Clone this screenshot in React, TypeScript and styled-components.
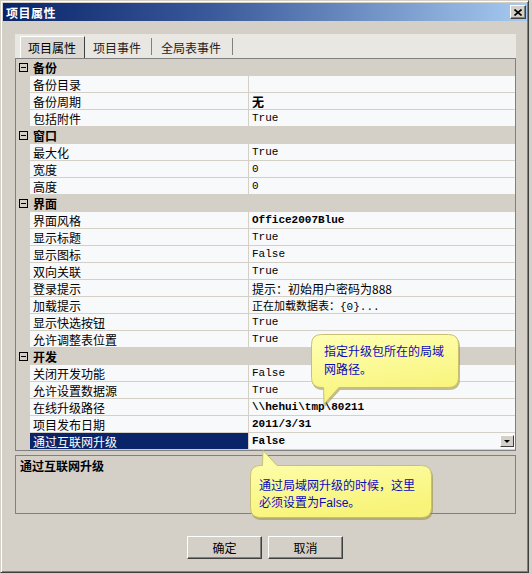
import React from 'react'
import styled, { createGlobalStyle } from 'styled-components'

const CJK = `'Noto Sans CJK SC', 'Liberation Sans', sans-serif`
const MONO = `'Liberation Mono', 'Noto Sans CJK SC', monospace`

const GlobalStyle = createGlobalStyle`
  html, body {
    margin: 0;
    padding: 0;
    background: #d4d0c8;
  }
  body {
    font-family: ${CJK};
    font-size: 12px;
    color: #000;
  }
`

type PropItem = {
  name: string
  value: string
  bold?: boolean
  mono?: boolean
  selected?: boolean
}

type Group = {
  title: string
  items: PropItem[]
}

const groups: Group[] = [
  {
    title: '备份',
    items: [
      { name: '备份目录', value: '' },
      { name: '备份周期', value: '无', bold: true },
      { name: '包括附件', value: 'True', mono: true },
    ],
  },
  {
    title: '窗口',
    items: [
      { name: '最大化', value: 'True', mono: true },
      { name: '宽度', value: '0', mono: true },
      { name: '高度', value: '0', mono: true },
    ],
  },
  {
    title: '界面',
    items: [
      { name: '界面风格', value: 'Office2007Blue', mono: true, bold: true },
      { name: '显示标题', value: 'True', mono: true },
      { name: '显示图标', value: 'False', mono: true },
      { name: '双向关联', value: 'True', mono: true },
      { name: '登录提示', value: '提示：初始用户密码为888' },
      { name: '加载提示', value: '正在加载数据表：{0}...', mono: true },
      { name: '显示快选按钮', value: 'True', mono: true },
      { name: '允许调整表位置', value: 'True', mono: true },
    ],
  },
  {
    title: '开发',
    items: [
      { name: '关闭开发功能', value: 'False', mono: true },
      { name: '允许设置数据源', value: 'True', mono: true },
      { name: '在线升级路径', value: '\\\\hehui\\tmp\\80211', mono: true, bold: true },
      { name: '项目发布日期', value: '2011/3/31', mono: true, bold: true },
      { name: '通过互联网升级', value: 'False', mono: true, bold: true, selected: true },
    ],
  },
]

const Window = styled.div`
  position: relative;
  box-sizing: border-box;
  width: 529px;
  height: 573px;
  padding: 2px 1px 0 2px;
  background: #d4d0c8;
  border: 1px solid #d4d0c8;
  border-right-color: #404040;
  border-bottom-color: #404040;
  box-shadow: inset 1px 1px #ffffff, inset -1px -1px #808080;
  display: flex;
  flex-direction: column;
`

const TitleBar = styled.div`
  height: 18px;
  display: flex;
  align-items: center;
  padding-left: 3px;
  background: linear-gradient(to right, #0a246a 0%, #3a5a9a 40%, #a6caf0 100%);
  color: #fff;
  font-weight: bold;
  font-size: 12px;
  letter-spacing: 0.5px;
`

const TitleText = styled.span`
  flex: 1;
`

const CloseButton = styled.div`
  box-sizing: border-box;
  width: 16px;
  height: 14px;
  margin-right: 1px;
  background: #d4d0c8;
  border: 1px solid #fff;
  border-right-color: #404040;
  border-bottom-color: #404040;
  box-shadow: inset -1px -1px #808080;
  display: flex;
  align-items: center;
  justify-content: center;
`

const Body = styled.div`
  padding: 13px 0 0 12px;
  display: flex;
  flex-direction: column;
  width: 501px;
`

const TabStrip = styled.div`
  height: 24px;
  background: #e9e7e2;
  display: flex;
  align-items: flex-end;
  padding-left: 5px;
`

const Tab = styled.div<{ $active?: boolean; $padL: number; $padR: number }>`
  box-sizing: border-box;
  height: 22px;
  display: flex;
  align-items: center;
  padding: 0 ${(p) => p.$padR}px 0 ${(p) => p.$padL}px;
  font-size: 12px;
  color: ${(p) => (p.$active ? '#000' : '#222')};
  background: ${(p) => (p.$active ? '#dcd9d2' : 'transparent')};
  border-top: 1px solid ${(p) => (p.$active ? '#fff' : 'transparent')};
  border-left: 1px solid ${(p) => (p.$active ? '#fff' : 'transparent')};
  border-right: 1px solid ${(p) => (p.$active ? '#404040' : 'transparent')};
`

const TabSep = styled.div`
  width: 1px;
  height: 17px;
  margin-bottom: 3px;
  background: #808080;
`

const Grid = styled.div`
  border: 1px solid #808080;
  background: #d4d0c8;
  display: flex;
  flex-direction: column;
`

const CategoryRow = styled.div`
  height: 17px;
  display: flex;
  align-items: center;
  background: #d4d0c8;
`

const Toggle = styled.span`
  box-sizing: border-box;
  width: 9px;
  height: 9px;
  margin-left: 3px;
  border: 1px solid #000;
  display: flex;
  align-items: center;
  justify-content: center;

  &::before {
    content: '';
    width: 5px;
    height: 1px;
    background: #000;
  }
`

const CategoryTitle = styled.span`
  margin-left: 5px;
  font-weight: bold;
  font-size: 12px;
`

const PropRow = styled.div`
  height: 17px;
  display: flex;
`

const Gutter = styled.div`
  width: 14px;
  flex-shrink: 0;
`

const NameCell = styled.div<{ $selected?: boolean }>`
  box-sizing: border-box;
  width: 219px;
  flex-shrink: 0;
  padding-left: 3px;
  display: flex;
  align-items: center;
  font-size: 12px;
  background: ${(p) => (p.$selected ? '#0a246a' : '#f8f9fb')};
  color: ${(p) => (p.$selected ? '#fff' : '#000')};
  border-right: 1px solid #d4d0c8;
  border-bottom: 1px solid #d4d0c8;
  white-space: nowrap;
`

const ValueCell = styled.div`
  box-sizing: border-box;
  flex: 1;
  padding-left: 3px;
  display: flex;
  align-items: center;
  background: #f8f9fb;
  border-bottom: 1px solid #d4d0c8;
  white-space: nowrap;
`

const ValueText = styled.span<{ $bold?: boolean; $mono?: boolean }>`
  font-family: ${(p) => (p.$mono ? MONO : CJK)};
  font-size: ${(p) => (p.$mono ? '11px' : '12px')};
  font-weight: ${(p) => (p.$bold ? 'bold' : 'normal')};
  flex: 1;
`

const DropButton = styled.div`
  box-sizing: border-box;
  width: 14px;
  height: 12px;
  margin-right: 1px;
  background: #d4d0c8;
  border: 1px solid #fff;
  border-right-color: #404040;
  border-bottom-color: #404040;
  display: flex;
  align-items: center;
  justify-content: center;

  &::before {
    content: '';
    border-left: 3px solid transparent;
    border-right: 3px solid transparent;
    border-top: 3px solid #000;
  }
`

const DescPanel = styled.div`
  box-sizing: border-box;
  height: 59px;
  margin-top: 4px;
  border: 1px solid #808080;
  padding: 1px 4px;
  line-height: 17px;
  font-weight: bold;
  font-size: 12px;
`

const ButtonRow = styled.div`
  display: flex;
  justify-content: center;
  gap: 6px;
  margin-top: 22px;
`

const DialogButton = styled.button`
  box-sizing: border-box;
  width: 75px;
  height: 23px;
  padding: 0;
  background: #d4d0c8;
  border: 1px solid #fff;
  border-right-color: #404040;
  border-bottom-color: #404040;
  box-shadow: inset -1px -1px #808080;
  font-family: ${CJK};
  font-size: 12px;
  color: #000;
`

const Bubble = styled.div<{ $left: number; $top: number; $w: number; $h: number }>`
  position: absolute;
  left: ${(p) => p.$left}px;
  top: ${(p) => p.$top}px;
  width: ${(p) => p.$w}px;
  height: ${(p) => p.$h}px;
`

const BubbleShape = styled.svg`
  position: absolute;
  left: 0;
  top: 0;
  overflow: visible;
  filter: drop-shadow(1px 2px 0 rgba(150, 140, 50, 0.55));
`

const BubbleText = styled.div<{ $padT: number; $padL: number; $lh: number }>`
  position: relative;
  padding: ${(p) => p.$padT}px 0 0 ${(p) => p.$padL}px;
  line-height: ${(p) => p.$lh}px;
  font-size: 12px;
  color: #0a0ac0;
  white-space: nowrap;
`

const Latin = styled.span`
  font-family: 'Liberation Sans', sans-serif;
`

const BubbleFill = () => (
  <defs>
    <linearGradient id="bfill" x1="0" y1="0" x2="0.3" y2="1">
      <stop offset="0" stopColor="#ffffb4" />
      <stop offset="1" stopColor="#f8f47a" />
    </linearGradient>
  </defs>
)

export default function App() {
  return (
    <>
      <GlobalStyle />
      <Window>
        <TitleBar>
          <TitleText>项目属性</TitleText>
          <CloseButton>
            <svg width="8" height="7" viewBox="0 0 8 7">
              <path d="M0.5 0.5 L7.5 6.5 M7.5 0.5 L0.5 6.5" stroke="#000" strokeWidth="1.6" />
            </svg>
          </CloseButton>
        </TitleBar>
        <Body>
          <TabStrip>
            <Tab $active $padL={7} $padR={8}>项目属性</Tab>
            <Tab $padL={7} $padR={9}>项目事件</Tab>
            <TabSep />
            <Tab $padL={8} $padR={10}>全局表事件</Tab>
            <TabSep />
          </TabStrip>
          <Grid>
            {groups.map((g) => (
              <React.Fragment key={g.title}>
                <CategoryRow>
                  <Toggle />
                  <CategoryTitle>{g.title}</CategoryTitle>
                </CategoryRow>
                {g.items.map((it) => (
                  <PropRow key={it.name}>
                    <Gutter />
                    <NameCell $selected={it.selected}>{it.name}</NameCell>
                    <ValueCell>
                      <ValueText $bold={it.bold} $mono={it.mono}>
                        {it.value}
                      </ValueText>
                      {it.selected && <DropButton />}
                    </ValueCell>
                  </PropRow>
                ))}
              </React.Fragment>
            ))}
          </Grid>
          <DescPanel>通过互联网升级</DescPanel>
        </Body>
        <ButtonRow>
          <DialogButton>确定</DialogButton>
          <DialogButton>取消</DialogButton>
        </ButtonRow>

        <Bubble $left={310} $top={333} $w={150} $h={72}>
          <BubbleShape width="150" height="72" viewBox="0 0 150 72">
            <BubbleFill />
            <path
              d="M10.5 0.5 H137.5 Q147.5 0.5 147.5 10.5 V43.5 Q147.5 53.5 137.5 53.5 H28 L13 70 L12.5 53.5 H10.5 Q0.5 53.5 0.5 43.5 V10.5 Q0.5 0.5 10.5 0.5 Z"
              fill="url(#bfill)"
              stroke="#c8c070"
            />
          </BubbleShape>
          <BubbleText $padT={8} $padL={13} $lh={18}>
            指定升级包所在的局域
            <br />
            网路径。
          </BubbleText>
        </Bubble>

        <Bubble $left={249} $top={449} $w={184} $h={70}>
          <BubbleShape width="184" height="70" viewBox="0 0 184 70">
            <BubbleFill />
            <path
              d="M10.5 15.5 H12.5 L13 0.5 L27 15.5 H171.5 Q181.5 15.5 181.5 25.5 V57.5 Q181.5 67.5 171.5 67.5 H10.5 Q0.5 67.5 0.5 57.5 V25.5 Q0.5 15.5 10.5 15.5 Z"
              fill="url(#bfill)"
              stroke="#c8c070"
            />
          </BubbleShape>
          <BubbleText $padT={26} $padL={9} $lh={17}>
            通过局域网升级的时候，这里
            <br />
            必须设置为<Latin>False</Latin>。
          </BubbleText>
        </Bubble>
      </Window>
    </>
  )
}
